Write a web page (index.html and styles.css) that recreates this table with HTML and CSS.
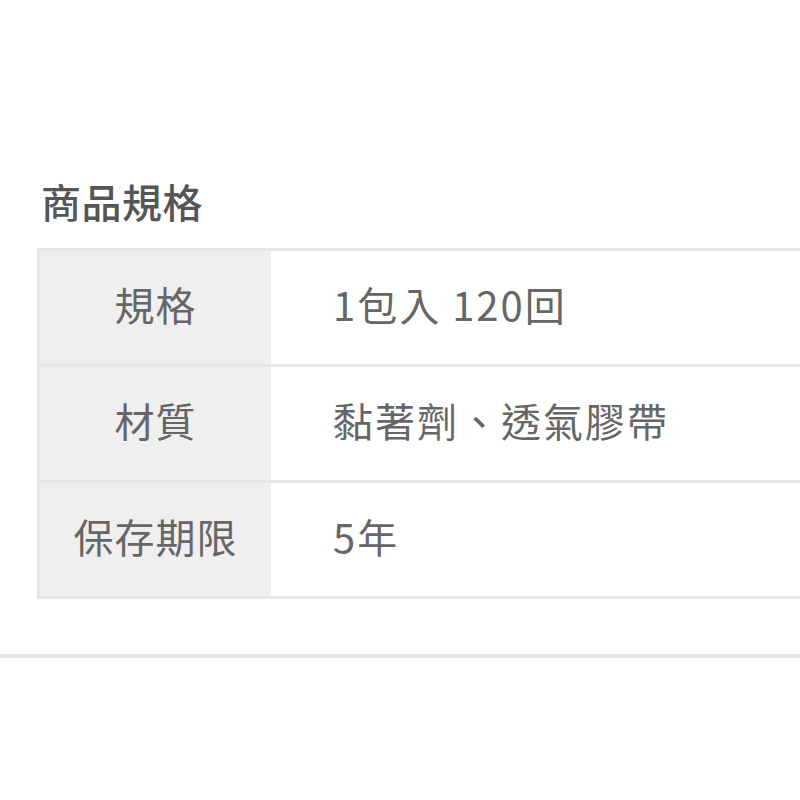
FILE: index.html
```html
<!DOCTYPE html>
<html lang="zh-Hant">
<head>
<meta charset="utf-8">
<link rel="stylesheet" href="styles.css">
</head>
<body>
<section class="spec">
  <h2 class="spec-title">商品規格</h2>
  <table class="spec-table">
    <tr><th>規格</th><td>1包入 120回</td></tr>
    <tr><th>材質</th><td>黏著劑、透氣膠帶</td></tr>
    <tr><th>保存期限</th><td>5年</td></tr>
  </table>
</section>
<div class="divider"></div>
</body>
</html>
```

FILE: styles.css
```css
html, body {
  margin: 0;
  padding: 0;
  background: #fff;
}
body {
  width: 800px;
  font-family: "Noto Sans CJK TC", "Noto Sans", sans-serif;
  color: #666;
}
.spec {
  padding: 172px 0 0 37px;
}
.spec-title {
  margin: 0 0 0 4px;
  font-size: 40px;
  font-weight: 500;
  color: #555;
  line-height: 58px;
  height: 76px;
  letter-spacing: 0.5px;
}
.spec-table {
  border-collapse: collapse;
  width: 763px;
  border: 3px solid #e6e6e6;
  border-right: none;
}
.spec-table tr {
  border-bottom: 3px solid #e6e6e6;
}
.spec-table th {
  width: 231px;
  padding: 0 0 8px;
  background: #efefef;
  font-weight: 400;
  font-size: 40px;
  color: #666;
  height: 105px;
  text-align: center;
  letter-spacing: 1px;
}
.spec-table td {
  padding: 0 0 8px 62px;
  font-size: 40px;
  color: #666;
  height: 105px;
  letter-spacing: 2px;
}
.divider {
  margin-top: 55px;
  height: 4px;
  background: #e3e3e3;
}
```
